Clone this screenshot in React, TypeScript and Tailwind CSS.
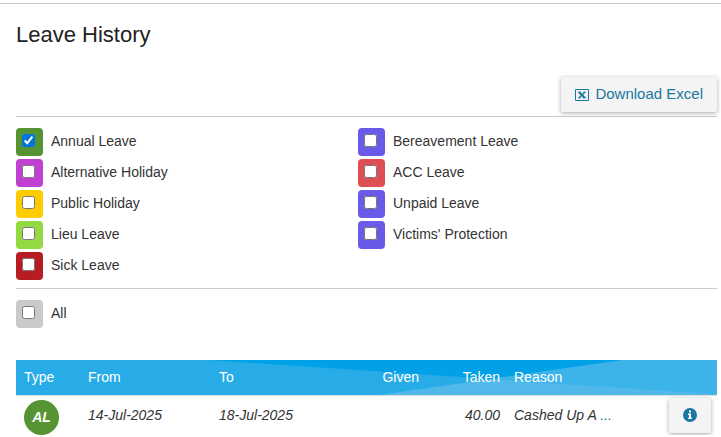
import { useState } from "react";

type Leave = { id: string; name: string; colour: string };

const leftLeave: Leave[] = [
  { id: "annual", name: "Annual Leave", colour: "bg-[#559333]" },
  { id: "alternative", name: "Alternative Holiday", colour: "bg-[#bf40d1]" },
  { id: "public", name: "Public Holiday", colour: "bg-[#ffcc00]" },
  { id: "lieu", name: "Lieu Leave", colour: "bg-[#92d942]" },
  { id: "sick", name: "Sick Leave", colour: "bg-[#b71c23]" },
];

const rightLeave: Leave[] = [
  { id: "bereavement", name: "Bereavement Leave", colour: "bg-[#6a5ae8]" },
  { id: "acc", name: "ACC Leave", colour: "bg-[#de4f55]" },
  { id: "unpaid", name: "Unpaid Leave", colour: "bg-[#6a5ae8]" },
  { id: "victims", name: "Victims' Protection", colour: "bg-[#6a5ae8]" },
];

function LeaveOption({
  leave,
  checked,
  onToggle,
}: {
  leave: Leave;
  checked: boolean;
  onToggle: () => void;
}) {
  return (
    <label className="flex h-7 items-start gap-2">
      <span className={`flex h-7 w-[27px] shrink-0 justify-center rounded pt-1.5 ${leave.colour}`}>
        <input
          type="checkbox"
          className="mr-0.5 size-[13px] accent-[#0075d9]"
          checked={checked}
          onChange={onToggle}
        />
      </span>
      <span className="pt-1 leading-[18px]">{leave.name}</span>
    </label>
  );
}

export default function App() {
  const [selected, setSelected] = useState<string[]>(["annual"]);
  const toggle = (id: string) =>
    setSelected((old) => (old.includes(id) ? old.filter((x) => x !== id) : [...old, id]));
  const option = (leave: Leave) => (
    <LeaveOption
      key={leave.id}
      leave={leave}
      checked={selected.includes(leave.id)}
      onToggle={() => toggle(leave.id)}
    />
  );

  return (
    <main className="bg-white pt-[3px] font-['Liberation_Sans',Arial,sans-serif] text-[14px] text-[#333]">
      <div className="border-t border-[#ccc] pr-1 pl-4">
        <h1 className="pt-[17px] text-[22px] leading-7 text-[#222]">Leave History</h1>
        <div className="mt-7 flex justify-end border-b border-[#ccc] pb-1">
          <button
            type="button"
            className="flex h-[35px] items-center gap-1.5 rounded-xs bg-[#f4f4f4] px-3.5 text-[15px] text-[#1878a0] shadow-[0_1px_4px_rgba(0,0,0,0.35)]"
          >
            <svg viewBox="0 0 14 14" className="size-3.5" fill="none" stroke="currentColor" aria-hidden="true">
              <path d="M.5 1.5h13v11H.5z" />
              <path d="M4.2 4.2l5.4 5.6" strokeWidth="2.2" />
              <path d="M9.8 4.2l-5.6 5.6" strokeWidth="1.3" />
              <path d="M3 4.2h3.2M8.2 4.2H11M3 9.8h2.8M8 9.8h3.2" />
            </svg>
            Download Excel
          </button>
        </div>

        <div className="grid grid-cols-[342px_1fr] border-b border-[#ccc] pt-[11px] pb-2">
          <div className="flex flex-col gap-[3px]">{leftLeave.map(option)}</div>
          <div className="flex flex-col gap-[3px]">{rightLeave.map(option)}</div>
        </div>
        <div className="pt-[11px]">{option({ id: "all", name: "All", colour: "bg-[#cacaca]" })}</div>

        <div className="relative mt-8">
          <svg
            viewBox="0 0 701 35"
            preserveAspectRatio="none"
            className="absolute top-0 left-0 h-[35px] w-full"
            aria-hidden="true"
          >
            <path d="M0 0h701v35H0z" fill="#27ace8" />
            <path d="M192 0H607L475 19z" fill="#00a1e6" />
            <path d="M607 0h94v34L475 19z" fill="#3db4e9" />
            <path d="M364 35L475 19 701 34v1z" fill="#50b9ea" />
          </svg>
          <table className="relative w-full table-fixed border-collapse text-left">
            <colgroup>
              <col className="w-16" />
              <col className="w-[131px]" />
              <col className="w-[131px]" />
              <col className="w-[85px]" />
              <col className="w-[81px]" />
              <col />
              <col className="w-[56px]" />
            </colgroup>
            <thead>
              <tr className="h-[35px] text-white">
                <th className="pl-2 font-normal">Type</th>
                <th className="pl-2 font-normal">From</th>
                <th className="pl-2 font-normal">To</th>
                <th className="pr-2 text-right font-normal">Given</th>
                <th className="pr-2 text-right font-normal">Taken</th>
                <th className="pl-1.5 font-normal">Reason</th>
                <th aria-label="Details" />
              </tr>
            </thead>
            <tbody>
              <tr className="border-t border-[#ddd] align-top italic">
                <td className="pt-1 pl-2">
                  <span className="flex size-[35px] items-center justify-center rounded-full bg-[#559333] font-bold text-white">
                    AL
                  </span>
                </td>
                <td className="pt-2.5 pl-2 leading-[18px]">14-Jul-2025</td>
                <td className="pt-2.5 pl-2 leading-[18px]">18-Jul-2025</td>
                <td />
                <td className="pt-2.5 pr-2 text-right leading-[18px]">40.00</td>
                <td className="pt-2.5 pl-1.5 leading-[18px]">
                  Cashed Up A <a href="#reason" className="text-[#1878a0]">...</a>
                </td>
                <td className="pt-0.5 pl-2">
                  <button
                    type="button"
                    aria-label="Leave details"
                    className="flex h-[35px] w-[42px] items-center justify-center rounded-xs bg-[#f4f4f4] text-[#1878a0] shadow-[0_1px_4px_rgba(0,0,0,0.35)]"
                  >
                    <svg viewBox="0 0 14 14" className="size-3.5" aria-hidden="true">
                      <circle cx="7" cy="7" r="7" fill="currentColor" />
                      <path d="M6 2.6h2v1.8H6zM5 5.6h3v4.2h1v1.3H5V9.8h1V6.9H5z" fill="#fff" />
                    </svg>
                  </button>
                </td>
              </tr>
            </tbody>
          </table>
        </div>
      </div>
    </main>
  );
}
